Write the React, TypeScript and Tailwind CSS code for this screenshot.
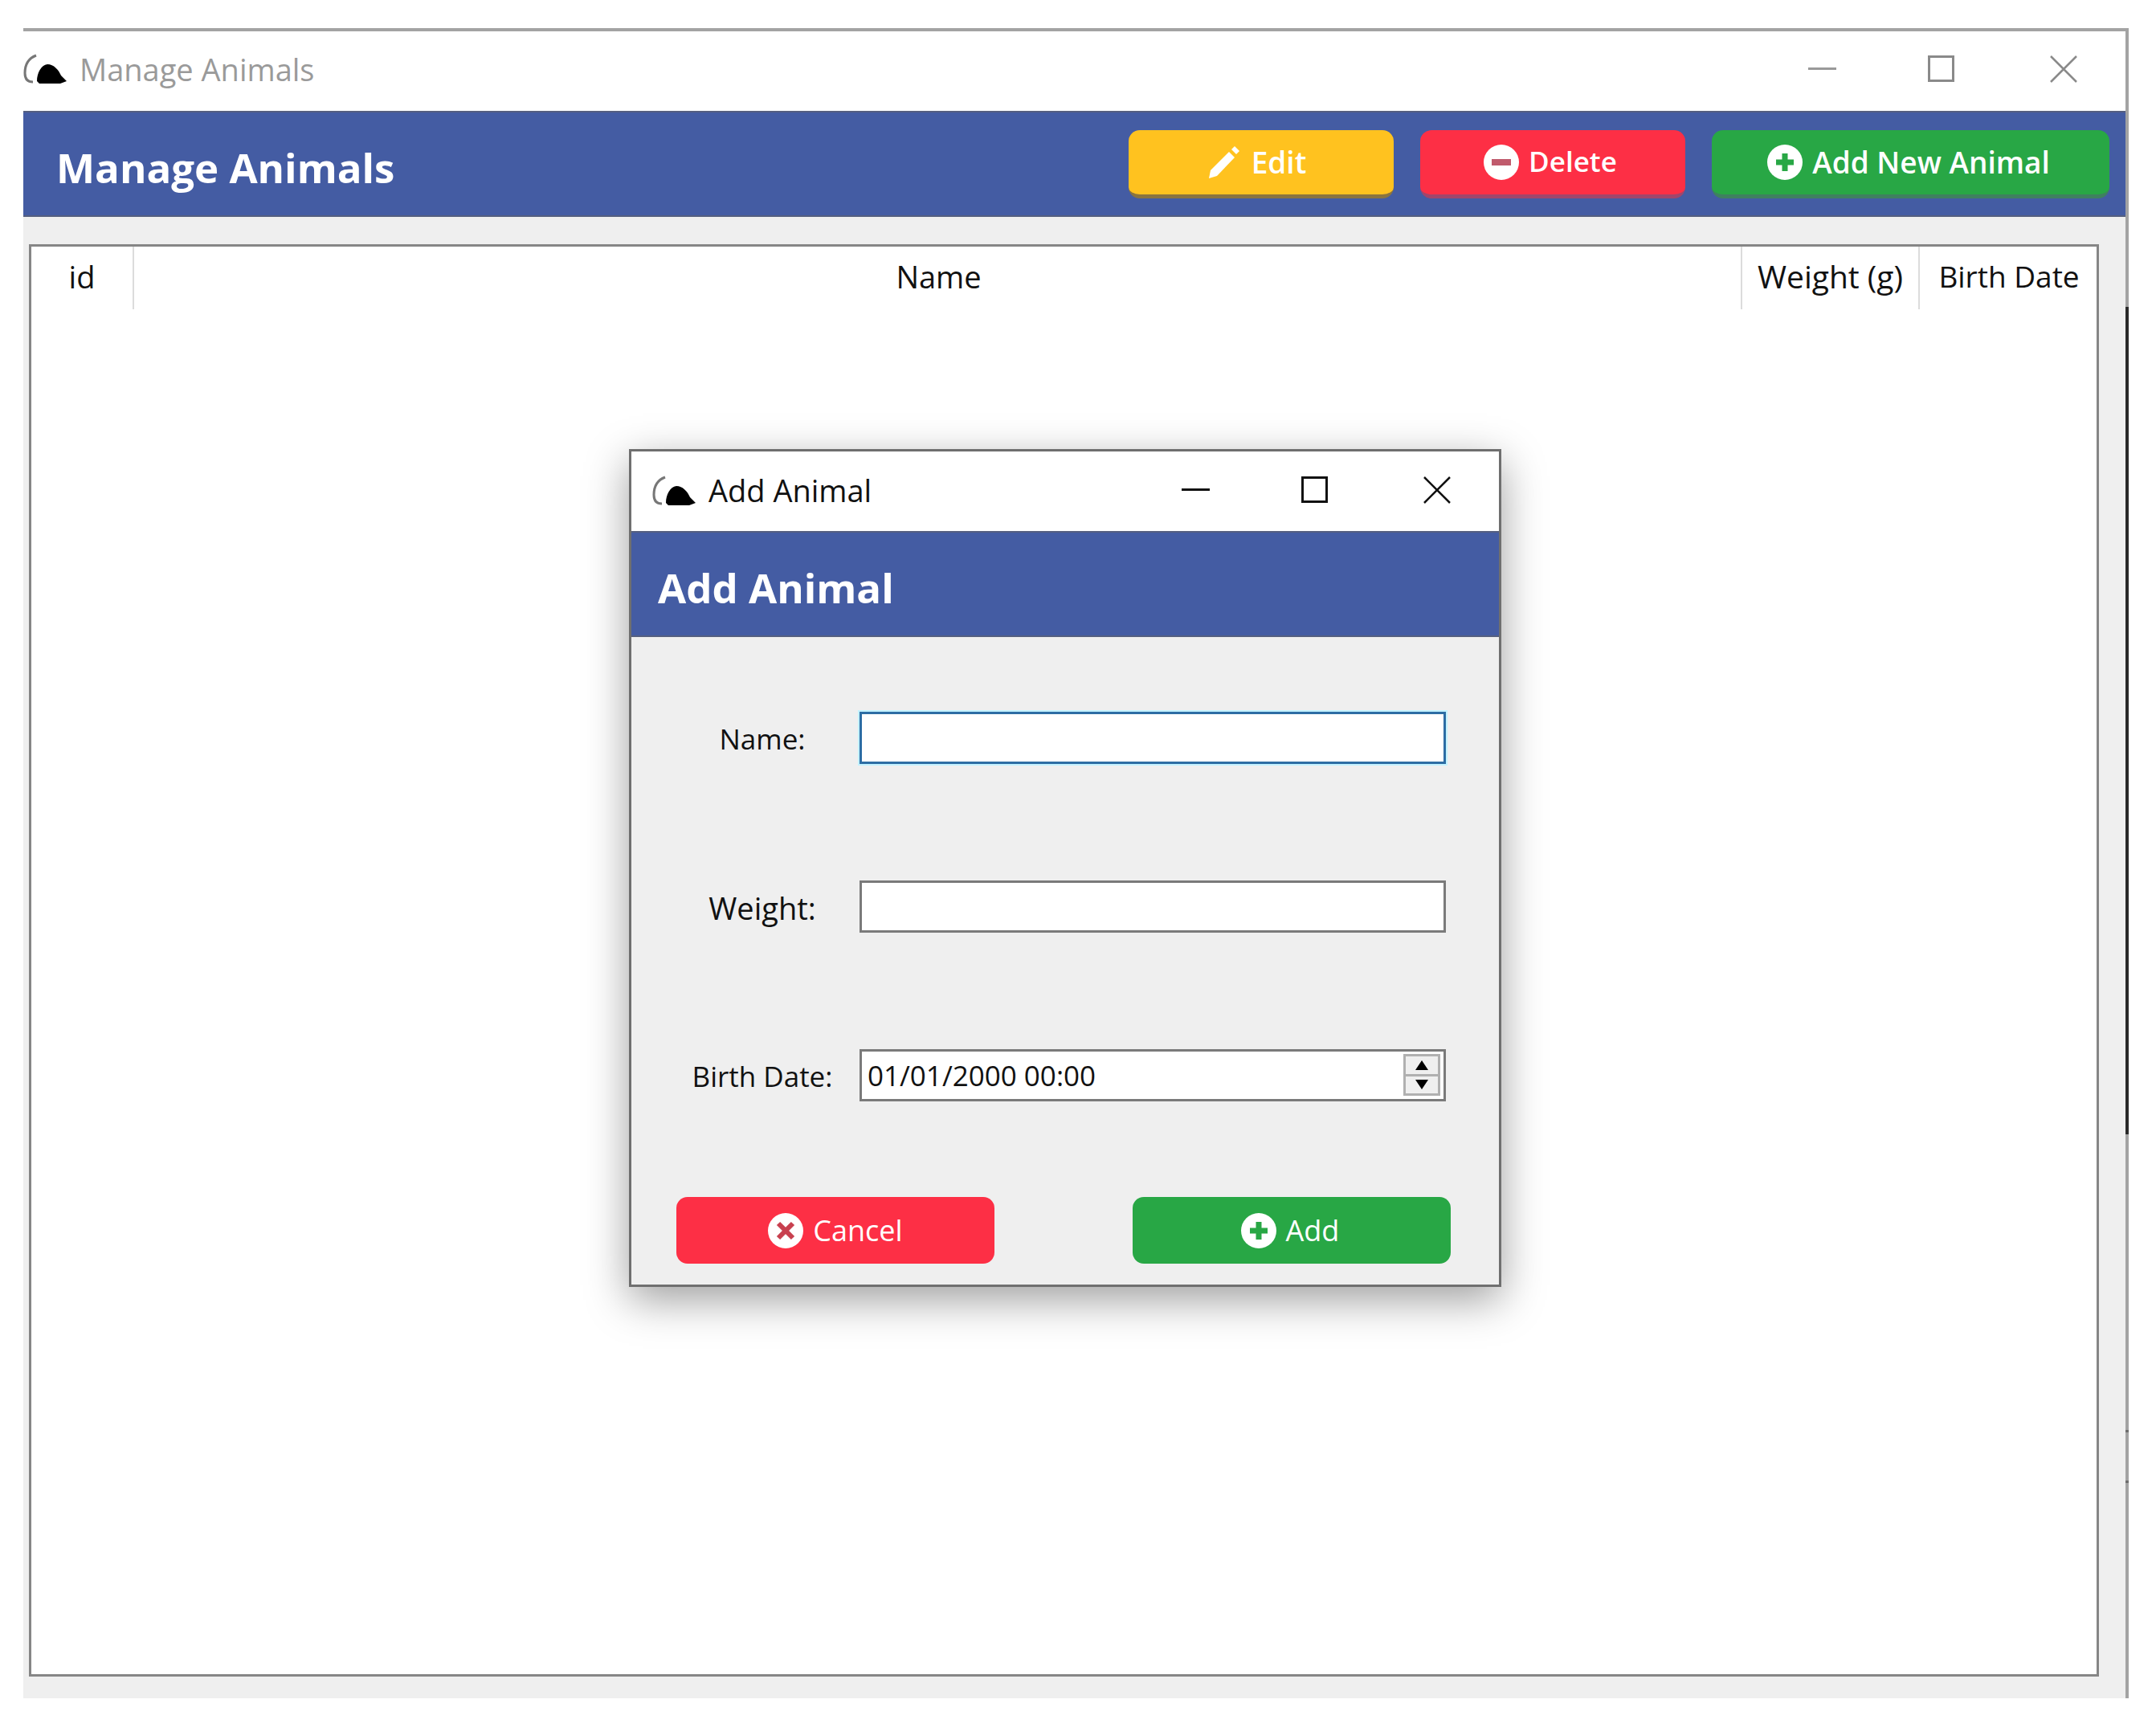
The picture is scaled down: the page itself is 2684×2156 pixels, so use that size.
type IconProps = { className?: string };

const fontStack = "font-['Open_Sans','Noto_Sans',sans-serif]";

function MouseIcon({ className }: IconProps) {
  return (
    <svg viewBox="0 0 56 38" className={className}>
      <path d="M16 2 C8 5 2 12 2 24 C2 31 5 35 12 35" fill="none" stroke="#777" strokeWidth="3" />
      <path d="M17 34 C17 24 22 14 30 13 C38 13 44 20 47 27 L54 34 L46 37 L20 37 Z" fill="#000" />
    </svg>
  );
}

function CircleIcon({ kind, bg, className }: IconProps & { kind: "plus" | "minus" | "x"; bg: string }) {
  return (
    <svg viewBox="0 0 44 44" className={className}>
      <circle cx="22" cy="22" r="22" fill="#fff" />
      {kind === "plus" && <path d="M22 11v22M11 22h22" stroke={bg} strokeWidth="7" />}
      {kind === "minus" && <path d="M10 22h24" stroke={bg} strokeWidth="8" />}
      {kind === "x" && <path d="M13 13l18 18M31 13L13 31" stroke={bg} strokeWidth="6" />}
    </svg>
  );
}

function PencilIcon({ className }: IconProps) {
  return (
    <svg viewBox="0 0 42 42" className={className}>
      <path d="M1 41 L3 31 L26 8 L33 15 L11 38 Z" fill="#fff" />
      <path d="M29 5 L33 1 L39 7 L35 11 Z" fill="#fff" />
    </svg>
  );
}

function ActionButton({
  color,
  edge,
  width,
  children,
}: {
  color: string;
  edge: string;
  width: string;
  children: React.ReactNode;
}) {
  return (
    <button className={`flex h-[85px] items-center justify-center rounded-[14px] border-b-[5px] text-[37px] font-semibold text-white ${color} ${edge} ${width}`}>
      {children}
    </button>
  );
}

function Field({ label, size, children }: { label: string; size: string; children: React.ReactNode }) {
  return (
    <div className="flex h-[66px] items-center">
      <span className={`w-[284px] pl-[42px] pt-[4px] text-center text-[#111] ${size}`}>{label}</span>
      {children}
    </div>
  );
}

export default function App() {
  return (
    <div className={`h-[2156px] w-[2684px] bg-white pl-[29px] pt-[35px] ${fontStack}`}>
      <div className="relative flex h-[2079px] w-[2621px] flex-col border-r-4 border-t-4 border-[#a3a3a3]">
        {/* dark bit of the window behind, on the right edge */}
        <div className="absolute right-[-4px] top-[343px] h-[1030px] w-[4px] bg-[#2a2a2a]" />
        <div className="absolute right-[-4px] top-[1741px] h-[3px] w-[4px] bg-[#6e6e6e]" />
        <div className="absolute right-[-4px] top-[1804px] h-[3px] w-[4px] bg-[#6e6e6e]" />

        <div className="flex h-[99px] shrink-0 items-center">
          <MouseIcon className="mb-[6px] h-[38px] w-[56px]" />
          <span className="mb-[4px] ml-[14px] text-[38px] text-[#9a9a9a]">Manage Animals</span>
          <div className="mb-[6px] ml-auto flex items-center">
            <div className="h-[3px] w-[35px] bg-[#999]" />
            <div className="ml-[114px] h-[33px] w-[33px] border-[3px] border-[#8a8a8a]" />
            <svg viewBox="0 0 34 34" className="ml-[119px] mr-[60px] h-[34px] w-[34px]">
              <path d="M1 1l32 32M33 1L1 33" stroke="#8a8a8a" strokeWidth="2.5" />
            </svg>
          </div>
        </div>

        <div className="flex h-[132px] shrink-0 items-center justify-between border-y-2 border-[#555f80] bg-[#445ca3] pl-[41px] pr-[20px]">
          <h1 className="pt-[8px] text-[51px] font-bold text-white">Manage Animals</h1>
          <div className="flex gap-[33px]">
            <ActionButton color="bg-[#ffc21f]" edge="border-[#8a7440]" width="w-[330px] pr-[10px]">
              <PencilIcon className="mr-[12px] h-[42px] w-[42px]" />
              Edit
            </ActionButton>
            <ActionButton color="bg-[#fd2f45]" edge="border-[#a0466c]" width="w-[330px] pr-[6px]">
              <CircleIcon kind="minus" bg="#c05a6c" className="mr-[12px] h-[44px] w-[44px]" />
              <span className="text-[35px]">Delete</span>
            </ActionButton>
            <ActionButton color="bg-[#28a745]" edge="border-[#3f8060]" width="w-[495px] pr-[5px]">
              <CircleIcon kind="plus" bg="#28a745" className="mr-[12px] h-[44px] w-[44px]" />
              Add New Animal
            </ActionButton>
          </div>
        </div>

        <div className="flex min-h-0 flex-1 bg-[#efefef] pb-[27px] pl-[7px] pr-[33px] pt-[34px]">
          <div className="relative flex-1 border-[3px] border-[#868686] bg-white">
            <div className="flex h-[78px] text-[38px] text-[#111]">
              <div className="flex w-[128px] items-center justify-center border-r-2 border-[#dcdcdc] pb-[4px]">id</div>
              <div className="flex flex-1 items-center justify-center border-r-2 border-[#dcdcdc] pb-[4px] pl-[3px]">Name</div>
              <div className="flex w-[221px] items-center justify-center border-r-2 border-[#dcdcdc] pb-[4px] text-[39px]">Weight (g)</div>
              <div className="flex w-[220px] items-center justify-center pb-[4px] pl-[2px] text-[37px]">Birth Date</div>
            </div>

            {/* Add Animal dialog */}
            <div className="absolute left-[744px] top-[252px] flex h-[1043px] w-[1086px] flex-col border-[3px] border-[#6f6f6f] bg-[#efefef] shadow-[0_16px_50px_rgba(0,0,0,0.38)]">
              <div className="flex h-[99px] shrink-0 items-center bg-white pl-[26px]">
                <MouseIcon className="mb-[2px] h-[38px] w-[56px]" />
                <span className="mb-[2px] ml-[14px] text-[38px] text-[#111]">Add Animal</span>
                <div className="mb-[4px] ml-auto flex items-center">
                  <div className="h-[3px] w-[35px] bg-[#111]" />
                  <div className="ml-[114px] h-[33px] w-[33px] border-[3px] border-[#111]" />
                  <svg viewBox="0 0 34 34" className="ml-[119px] mr-[60px] h-[34px] w-[34px]">
                    <path d="M1 1l32 32M33 1L1 33" stroke="#111" strokeWidth="2.5" />
                  </svg>
                </div>
              </div>
              <div className="flex h-[132px] shrink-0 items-center border-y-2 border-[#555f80] bg-[#445ca3] pl-[33px]">
                <h2 className="pt-[8px] text-[51px] font-bold text-white">Add Animal</h2>
              </div>
              <div className="flex flex-1 flex-col pt-[92px]">
                <div className="flex flex-col gap-[144px]">
                  <Field label="Name:" size="text-[35px]">
                    <div className="h-[65px] w-[730px] border-[3px] border-[#2d6da4] bg-white outline-2 outline-[#c4f2ff]" />
                  </Field>
                  <Field label="Weight:" size="text-[38px]">
                    <div className="h-[65px] w-[730px] border-[3px] border-[#7a7a7a] bg-white" />
                  </Field>
                  <Field label="Birth Date:" size="text-[35px]">
                    <div className="flex h-[65px] w-[730px] items-center justify-between border-[3px] border-[#7a7a7a] bg-white pl-[7px] pr-[4px]">
                      <span className="pt-[2px] text-[35px] text-[#111]">01/01/2000 00:00</span>
                      <div className="flex h-[52px] w-[46px] flex-col border-[3px] border-[#b0b0b0] bg-[#efefef]">
                        <div className="flex flex-1 items-center justify-center border-b-[3px] border-[#b0b0b0]">
                          <svg viewBox="0 0 16 12" className="h-[12px] w-[16px]"><path d="M8 0l8 12H0z" fill="#000" /></svg>
                        </div>
                        <div className="flex flex-1 items-center justify-center">
                          <svg viewBox="0 0 16 12" className="h-[12px] w-[16px]"><path d="M0 0h16L8 12z" fill="#000" /></svg>
                        </div>
                      </div>
                    </div>
                  </Field>
                </div>
                <div className="mt-[119px] flex justify-between pl-[56px] pr-[60px]">
                  <button className="flex h-[83px] w-[396px] items-center justify-center rounded-[14px] bg-[#fd2f45] text-[36px] text-white">
                    <CircleIcon kind="x" bg="#c8404f" className="mr-[12px] h-[44px] w-[44px]" />
                    Cancel
                  </button>
                  <button className="flex h-[83px] w-[396px] items-center justify-center rounded-[14px] bg-[#28a745] pr-[4px] text-[36px] text-white">
                    <CircleIcon kind="plus" bg="#28a745" className="mr-[12px] h-[44px] w-[44px]" />
                    Add
                  </button>
                </div>
              </div>
            </div>
          </div>
        </div>
      </div>
    </div>
  );
}
